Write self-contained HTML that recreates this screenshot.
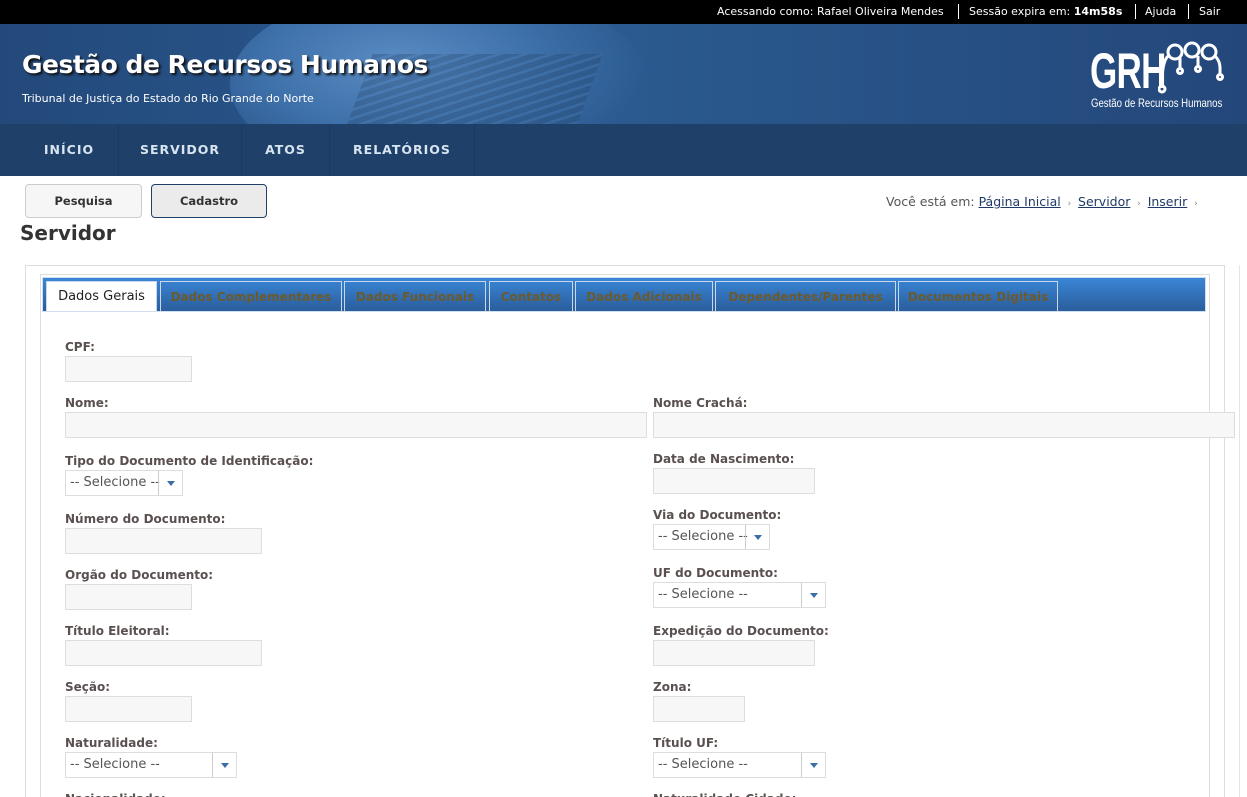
<!DOCTYPE html>
<html><head><meta charset="utf-8"><style>
*{box-sizing:border-box;margin:0;padding:0}
html,body{width:1247px;height:797px;overflow:hidden}
body{background:#fff;font-family:"DejaVu Sans","Liberation Sans",sans-serif}
#wrap{position:relative;width:1247px;height:797px;overflow:hidden}
.a{position:absolute}
#top{left:0;top:0;width:1247px;height:24px;background:#000;color:#fff;font-size:11px;}
#top span{position:absolute;top:5px}
#hdr{left:0;top:24px;width:1247px;height:100px;background:linear-gradient(90deg,#23497a 0%,#2b5a90 40%,#2a5a8f 50%,#24477a 100%);overflow:hidden}
#nav{left:0;top:124px;width:1247px;height:52px;background:#1f4169}
.nv{position:absolute;top:0;height:52px;line-height:52px;color:#d8e4f0;font-weight:bold;font-size:12.5px;letter-spacing:1px;text-align:center;border-right:1px solid #1b3a5f}
.btn{position:absolute;top:184px;height:34px;border:1px solid #ccc;border-radius:4px;background:#f6f6f6;font-weight:bold;font-size:11.5px;text-align:center;line-height:32px;color:#333}
.lbl{position:absolute;font-size:12px;font-weight:bold;color:#5a5050}
.in{position:absolute;height:26px;background:#f7f7f7;border:1px solid #ddd}
.sel{position:absolute;height:26px;background:#fff;border:1px solid #ddd;font-size:13px;color:#555;line-height:24px;padding-left:4px}
.sel i{position:absolute;right:0;top:0;width:24px;height:24px;border-left:1px solid #ccc;box-shadow:1px 1px 0 #ddd}
.sel i:after{content:"";position:absolute;left:8px;top:10px;border-left:4px solid transparent;border-right:4px solid transparent;border-top:5px solid #3a6ea5}
.tab{position:absolute;top:281px;height:30px;border:1px solid #c8d8ea;border-bottom:none;color:#6b5a2e;font-weight:bold;font-size:12px;line-height:30px;text-align:center;white-space:nowrap;overflow:hidden}
</style></head><body><div id="wrap">
<div id="top" class="a">
<span style="left:717px">Acessando como: Rafael Oliveira Mendes</span>
<span style="left:958px;top:4px;width:1px;height:15px;background:#fff"></span>
<span style="left:969px">Sessão expira em: <b>14m58s</b></span>
<span style="left:1135px;top:4px;width:1px;height:15px;background:#fff"></span>
<span style="left:1145px">Ajuda</span>
<span style="left:1188px;top:4px;width:1px;height:15px;background:#fff"></span>
<span style="left:1199px">Sair</span>
</div>
<div id="hdr" class="a">
<div class="a" style="left:230px;top:-40px;width:420px;height:200px;border-radius:50%;background:radial-gradient(ellipse at 40% 40%,#5b8cc4 0%,#3d6fa8 40%,rgba(40,80,130,0) 70%)"></div>
<div class="a" style="left:360px;top:30px;width:230px;height:70px;background:repeating-linear-gradient(160deg,#24446c 0 6px,#3f6ea3 6px 9px);opacity:.35;transform:skewX(-20deg)"></div>
<div class="a" style="left:22px;top:26px;font-weight:bold;font-size:25px;color:#fff;text-shadow:2px 2px 2px #111;letter-spacing:-0.5px">Gestão de Recursos Humanos</div>
<div class="a" style="left:22px;top:68px;font-size:11px;color:#fff">Tribunal de Justiça do Estado do Rio Grande do Norte</div>
<div class="a" style="left:1090px;top:20px;font-family:'Liberation Sans Narrow','Liberation Sans',sans-serif;font-weight:bold;font-size:50px;color:#fff;letter-spacing:-1px;transform:scaleX(.7);transform-origin:left;line-height:54px">GRH</div>
<svg class="a" style="left:1158px;top:14px" width="66" height="60" viewBox="0 0 66 60" fill="none" stroke="#fff" stroke-width="3">
<circle cx="17" cy="14" r="7"/><circle cx="34" cy="12" r="7"/><circle cx="51" cy="14" r="7"/>
<path d="M10 18 C4 24 4 40 4 48"/><circle cx="4" cy="51" r="3"/>
<path d="M22 20 L22 30"/><circle cx="22" cy="33" r="2.5"/>
<path d="M40 18 L40 28"/><circle cx="40" cy="31" r="2.5"/>
<path d="M57 18 C63 24 62 30 62 36"/><circle cx="62" cy="39" r="2.5"/>
</svg>
<div class="a" style="left:1091px;top:72px;font-family:'Liberation Sans Narrow','Liberation Sans',sans-serif;font-size:12px;color:#fff;transform:scaleX(.8);transform-origin:left;white-space:nowrap">Gestão de Recursos Humanos</div>
</div>
<div id="nav" class="a">
<div class="nv" style="left:20px;width:99px">INÍCIO</div>
<div class="nv" style="left:119px;width:123px">SERVIDOR</div>
<div class="nv" style="left:242px;width:88px">ATOS</div>
<div class="nv" style="left:330px;width:145px">RELATÓRIOS</div>
</div>
<div class="btn" style="left:25px;width:117px">Pesquisa</div>
<div class="btn" style="left:151px;width:116px;border-color:#1f4169;background:#ebebeb">Cadastro</div>
<div class="a" style="left:886px;top:194px;font-size:12.5px;color:#555;white-space:nowrap">Você está em: <u style="color:#1f3a66">Página Inicial</u> <span style="font-size:9px;color:#888">&nbsp;›&nbsp;</span> <u style="color:#1f3a66">Servidor</u> <span style="font-size:9px;color:#888">&nbsp;›&nbsp;</span> <u style="color:#1f3a66">Inserir</u> <span style="font-size:9px;color:#888">&nbsp;›</span></div>
<div class="a" style="left:20px;top:221px;font-size:20px;font-weight:bold;color:#333">Servidor</div>
<div class="a" style="left:25px;top:265px;width:1200px;height:560px;border:1px solid #ddd"></div>
<div class="a" style="left:40px;top:274px;width:1170px;height:560px;border:1px solid #ddd"></div>
<div class="a" style="left:1239px;top:265px;width:1px;height:540px;background:#e4e4e4"></div>
<div class="a" style="left:42px;top:277px;width:1164px;height:35px;background:linear-gradient(#3a86d6,#2a5d9c);border:1px solid #cfdff0"></div>
<div class="tab" style="left:46px;width:111px;background:#fff;color:#222;font-weight:normal;font-size:13px">Dados Gerais</div>
<div class="tab" style="left:160px;width:182px">Dados Complementares</div>
<div class="tab" style="left:344px;width:142px">Dados Funcionais</div>
<div class="tab" style="left:489px;width:84px">Contatos</div>
<div class="tab" style="left:575px;width:138px">Dados Adicionais</div>
<div class="tab" style="left:715px;width:181px">Dependentes/Parentes</div>
<div class="tab" style="left:898px;width:160px">Documentos Digitais</div>

<div class="lbl" style="left:65px;top:340px">CPF:</div><div class="in" style="left:65px;top:356px;width:127px"></div>
<div class="lbl" style="left:65px;top:396px">Nome:</div><div class="in" style="left:65px;top:412px;width:582px"></div>
<div class="lbl" style="left:653px;top:396px">Nome Crachá:</div><div class="in" style="left:653px;top:412px;width:582px"></div>
<div class="lbl" style="left:65px;top:454px">Tipo do Documento de Identificação:</div><div class="sel" style="left:65px;top:470px;width:118px">-- Selecione --<i></i></div>
<div class="lbl" style="left:653px;top:452px">Data de Nascimento:</div><div class="in" style="left:653px;top:468px;width:162px"></div>
<div class="lbl" style="left:65px;top:512px">Número do Documento:</div><div class="in" style="left:65px;top:528px;width:197px"></div>
<div class="lbl" style="left:653px;top:508px">Via do Documento:</div><div class="sel" style="left:653px;top:524px;width:117px">-- Selecione --<i></i></div>
<div class="lbl" style="left:65px;top:568px">Orgão do Documento:</div><div class="in" style="left:65px;top:584px;width:127px"></div>
<div class="lbl" style="left:653px;top:566px">UF do Documento:</div><div class="sel" style="left:653px;top:582px;width:173px">-- Selecione --<i></i></div>
<div class="lbl" style="left:65px;top:624px">Título Eleitoral:</div><div class="in" style="left:65px;top:640px;width:197px"></div>
<div class="lbl" style="left:653px;top:624px">Expedição do Documento:</div><div class="in" style="left:653px;top:640px;width:162px"></div>
<div class="lbl" style="left:65px;top:680px">Seção:</div><div class="in" style="left:65px;top:696px;width:127px"></div>
<div class="lbl" style="left:653px;top:680px">Zona:</div><div class="in" style="left:653px;top:696px;width:92px"></div>
<div class="lbl" style="left:65px;top:736px">Naturalidade:</div><div class="sel" style="left:65px;top:752px;width:172px">-- Selecione --<i></i></div>
<div class="lbl" style="left:653px;top:736px">Título UF:</div><div class="sel" style="left:653px;top:752px;width:173px">-- Selecione --<i></i></div>
<div class="lbl" style="left:65px;top:792px">Nacionalidade:</div>
<div class="lbl" style="left:653px;top:792px">Naturalidade Cidade:</div>
</div></body></html>
